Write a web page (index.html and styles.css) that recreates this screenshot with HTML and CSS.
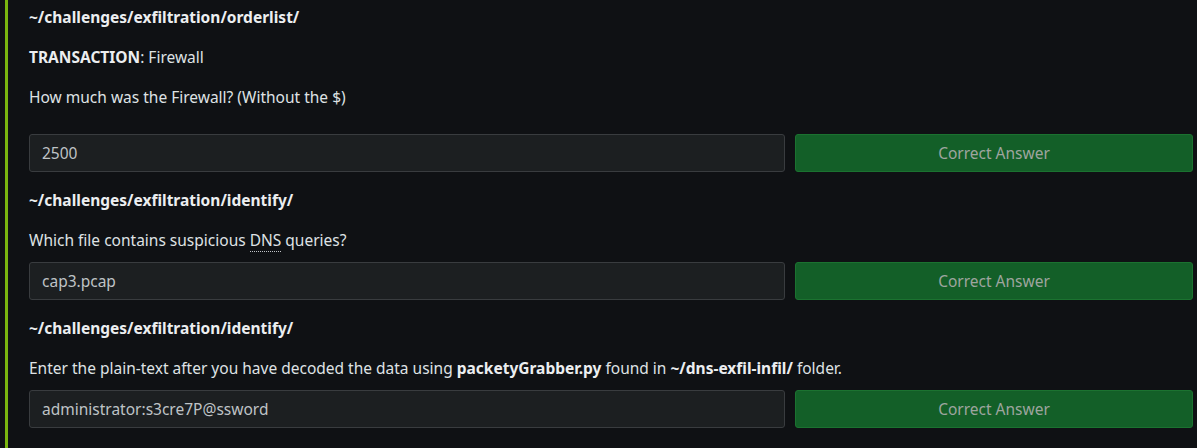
FILE: index.html
```html
<!DOCTYPE html>
<html>
<head>
<meta charset="utf-8">
<link rel="stylesheet" href="styles.css">
</head>
<body>
<div class="task">
  <div class="block first">
    <p class="path">~/challenges/exfiltration/orderlist/</p>
    <p class="text"><strong>TRANSACTION</strong>: Firewall</p>
    <p class="text q q-first">How much was the Firewall? (Without the $)</p>
    <div class="row">
      <div class="field">2500</div>
      <button class="btn">Correct Answer</button>
    </div>
  </div>
  <div class="block">
    <p class="path">~/challenges/exfiltration/identify/</p>
    <p class="text q">Which file contains suspicious <abbr>DNS</abbr> queries?</p>
    <div class="row">
      <div class="field">cap3.pcap</div>
      <button class="btn">Correct Answer</button>
    </div>
  </div>
  <div class="block">
    <p class="path">~/challenges/exfiltration/identify/</p>
    <p class="text q">Enter the plain-text after you have decoded the data using <strong>packetyGrabber.py</strong> found in <strong>~/dns-exfil-infil/</strong> folder.</p>
    <div class="row">
      <div class="field">administrator:s3cre7P@ssword</div>
      <button class="btn">Correct Answer</button>
    </div>
  </div>
</div>
</body>
</html>
```
FILE: styles.css
```css
html, body {
  margin: 0;
  padding: 0;
  background: #0f1114;
}
body {
  font-family: "Noto Sans", "Open Sans", sans-serif;
  font-size: 15.5px;
  color: #dfe2e4;
  height: 448px;
  overflow: hidden;
}
.task {
  margin-left: 5px;
  border-left: 3px solid #7ab50f;
  padding: 6px 4px 20px 21px;
}
.block {
  display: flex;
  flex-direction: column;
}
p {
  margin: 0;
  line-height: 22px;
}
.path {
  font-weight: bold;
  color: #eceef0;
}
.text {
  margin-top: 18px;
}
.q {
  margin-bottom: 11px;
}
.q-first {
  margin-bottom: 26px;
}
strong {
  font-weight: bold;
  color: #eceef0;
}
abbr {
  text-decoration: none;
  border-bottom: 1px dotted #c0c4c8;
}
.row {
  display: grid;
  grid-template-columns: 1fr 398px;
  gap: 10px;
  margin-bottom: 17px;
}
.field {
  height: 36px;
  box-sizing: content-box;
  border: 1px solid #393c3f;
  border-radius: 3px;
  background: #1c1f21;
  padding: 0 12px;
  display: flex;
  align-items: center;
  font-size: 15.5px;
  color: #bfc3c6;
}
.btn {
  height: 38px;
  border: 1px solid #1b7230;
  border-radius: 3px;
  background: #135f28;
  color: #9ea59f;
  font-family: inherit;
  font-size: 15.5px;
  padding: 0;
}
```
